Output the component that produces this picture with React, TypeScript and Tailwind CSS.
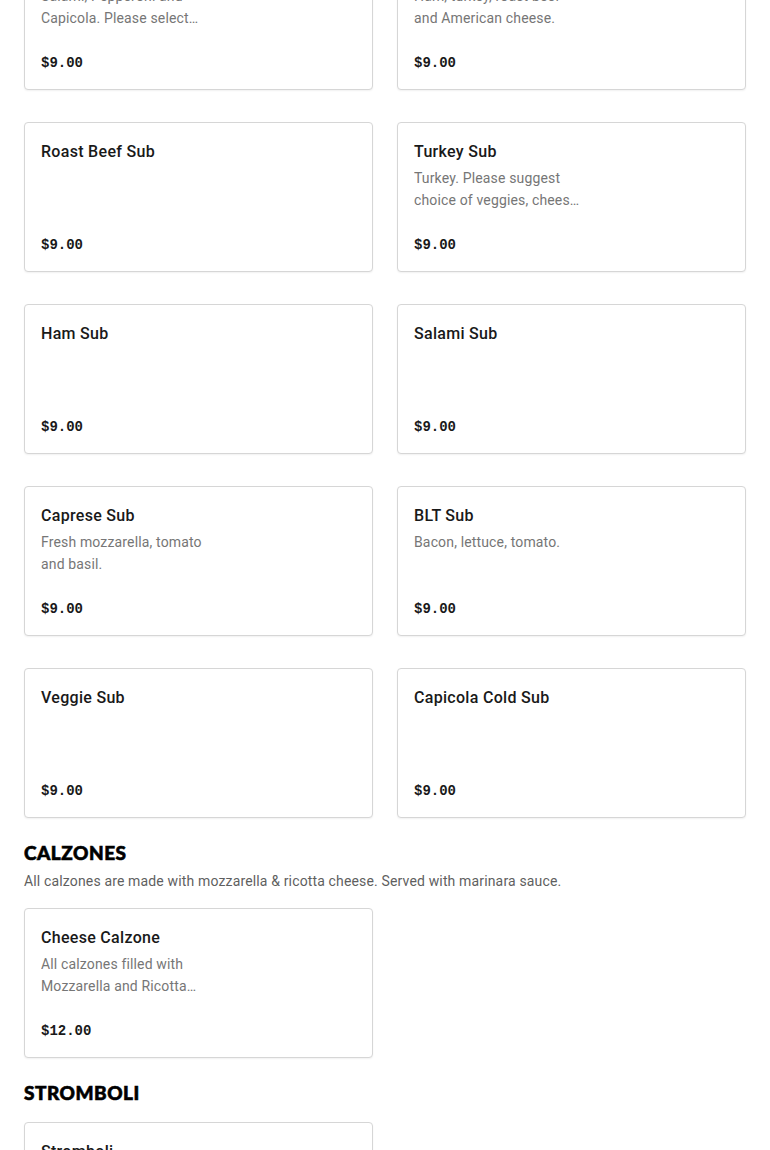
import React from 'react'

type Item = { name: string; desc?: string; price: string }

const subs: Item[] = [
  { name: 'Italian Sub', desc: 'Salami, Pepperoni and Capicola. Please select…', price: '$9.00' },
  { name: 'Club Sub', desc: 'Ham, turkey, roast beef and American cheese.', price: '$9.00' },
  { name: 'Roast Beef Sub', price: '$9.00' },
  { name: 'Turkey Sub', desc: 'Turkey. Please suggest choice of veggies, chees…', price: '$9.00' },
  { name: 'Ham Sub', price: '$9.00' },
  { name: 'Salami Sub', price: '$9.00' },
  { name: 'Caprese Sub', desc: 'Fresh mozzarella, tomato and basil.', price: '$9.00' },
  { name: 'BLT Sub', desc: 'Bacon, lettuce, tomato.', price: '$9.00' },
  { name: 'Veggie Sub', price: '$9.00' },
  { name: 'Capicola Cold Sub', price: '$9.00' },
]

const calzones: Item[] = [
  { name: 'Cheese Calzone', desc: 'All calzones filled with Mozzarella and Ricotta…', price: '$12.00' },
]

const stromboli: Item[] = [
  { name: 'Stromboli', desc: 'Pepperoni, ham, salami and mozzarella.', price: '$13.00' },
]

function Card({ item }: { item: Item }) {
  return (
    <div className="h-[150px] flex flex-col rounded-[4px] border border-[#d6d6d6] bg-white pt-[17px] px-4 pb-4 shadow-[0_1px_2px_rgba(0,0,0,0.06)]">
      <div className="text-[16px] leading-6 font-medium tracking-[0.3px] text-[#191919]">{item.name}</div>
      {item.desc && (
        <div className="mt-[3px] w-[170px] text-[14px] leading-[22px] tracking-[0.15px] text-[#767676] line-clamp-2">{item.desc}</div>
      )}
      <div className="mt-auto font-['Liberation_Mono',monospace] text-[14px] leading-5 font-bold text-[#191919]">{item.price}</div>
    </div>
  )
}

function Heading({ children }: { children: React.ReactNode }) {
  return (
    <h2 className="font-['Lato',sans-serif] font-black text-[19px] leading-7 tracking-[0.5px] text-black uppercase [-webkit-text-stroke:0.6px_black]">{children}</h2>
  )
}

export default function App() {
  return (
    <div className="h-[1150px] overflow-hidden bg-white font-['Roboto','Liberation_Sans',sans-serif]">
      <div className="px-6 -mt-[60px]">
        <div className="grid grid-cols-2 gap-x-6 gap-y-8">
          {subs.map(s => <Card key={s.name} item={s} />)}
        </div>

        <div className="mt-[21px]">
          <Heading>Calzones</Heading>
          <p className="mt-[3px] text-[14px] leading-[22px] tracking-[0.15px] text-[#5f5f5f]">
            All calzones are made with mozzarella &amp; ricotta cheese. Served with marinara sauce.
          </p>
          <div className="mt-4 grid grid-cols-2 gap-x-6 gap-y-8">
            {calzones.map(s => <Card key={s.name} item={s} />)}
          </div>
        </div>

        <div className="mt-[21px]">
          <Heading>Stromboli</Heading>
          <div className="mt-[15px] grid grid-cols-2 gap-x-6 gap-y-8">
            {stromboli.map(s => <Card key={s.name} item={s} />)}
          </div>
        </div>
      </div>
    </div>
  )
}
